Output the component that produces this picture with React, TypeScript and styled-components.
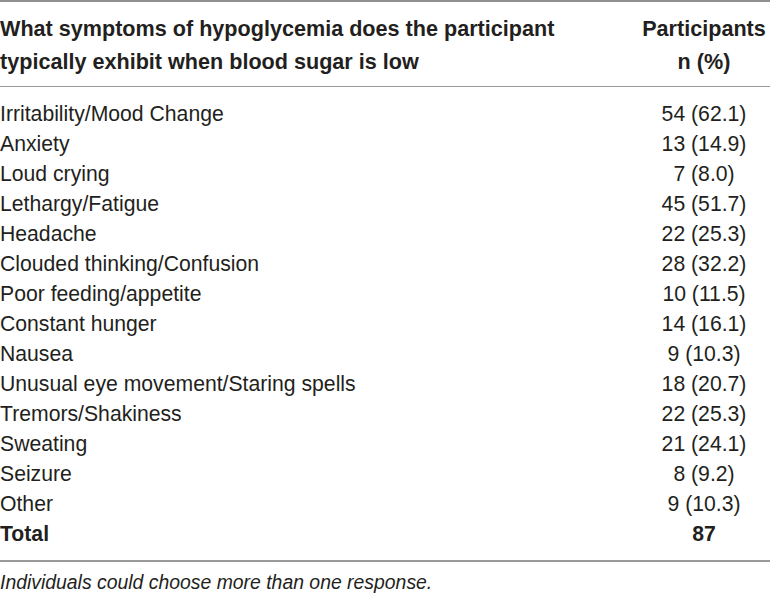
import styled, { createGlobalStyle } from 'styled-components';

const GlobalStyle = createGlobalStyle`
	html, body {
		margin: 0;
		padding: 0;
		background: #ffffff;
	}

	body {
		font-family: 'Liberation Sans', Arial, sans-serif;
		color: #231f20;
	}
`;

const TableWrapper = styled.div`
	width: 772px;
	padding-right: 2px;
	box-sizing: border-box;
`;

const Table = styled.table`
	width: 100%;
	border-collapse: collapse;
	border-top: 2px solid #8f8f8f;
	border-bottom: 2px solid #9a9a9a;
`;

const HeadCell = styled.th<{ $align?: 'left' | 'center' }>`
	text-align: ${(props) => props.$align || 'left'};
	font-size: 21.6px;
	font-weight: 700;
	line-height: 33px;
	padding: 10px 0 8px;
	border-bottom: 1px solid #9a9a9a;
	vertical-align: top;
	white-space: nowrap;
`;

const Cell = styled.td<{ $align?: 'left' | 'center'; $bold?: boolean }>`
	text-align: ${(props) => props.$align || 'left'};
	font-size: 21.2px;
	font-weight: ${(props) => (props.$bold ? 700 : 400)};
	line-height: 30px;
	padding: 0;
	white-space: nowrap;
`;

const SpacerRow = styled.tr<{ $h: number }>`
	height: ${(props) => props.$h}px;
`;

const ValueCol = styled.col`
	width: 132px;
`;

const Footnote = styled.p`
	margin: 9px 0 0;
	font-size: 19.4px;
	font-style: italic;
	line-height: 22px;
	color: #231f20;
`;

const rows: [string, string][] = [
	['Irritability/Mood Change', '54 (62.1)'],
	['Anxiety', '13 (14.9)'],
	['Loud crying', '7 (8.0)'],
	['Lethargy/Fatigue', '45 (51.7)'],
	['Headache', '22 (25.3)'],
	['Clouded thinking/Confusion', '28 (32.2)'],
	['Poor feeding/appetite', '10 (11.5)'],
	['Constant hunger', '14 (16.1)'],
	['Nausea', '9 (10.3)'],
	['Unusual eye movement/Staring spells', '18 (20.7)'],
	['Tremors/Shakiness', '22 (25.3)'],
	['Sweating', '21 (24.1)'],
	['Seizure', '8 (9.2)'],
	['Other', '9 (10.3)']
];

const App = () => {
	return (
		<>
			<GlobalStyle />
			<TableWrapper>
				<Table>
					<colgroup>
						<col />
						<ValueCol />
					</colgroup>
					<thead>
						<tr>
							<HeadCell>
								What symptoms of hypoglycemia does the participant
								<br />
								typically exhibit when blood sugar is low
							</HeadCell>
							<HeadCell $align="center">
								Participants
								<br />
								n (%)
							</HeadCell>
						</tr>
					</thead>
					<tbody>
						<SpacerRow $h={12} />
						{rows.map(([label, value]) => (
							<tr key={label}>
								<Cell>{label}</Cell>
								<Cell $align="center">{value}</Cell>
							</tr>
						))}
						<tr>
							<Cell $bold>Total</Cell>
							<Cell $align="center" $bold>
								87
							</Cell>
						</tr>
						<SpacerRow $h={12} />
					</tbody>
				</Table>
				<Footnote>Individuals could choose more than one response.</Footnote>
			</TableWrapper>
		</>
	);
};

export default App;
